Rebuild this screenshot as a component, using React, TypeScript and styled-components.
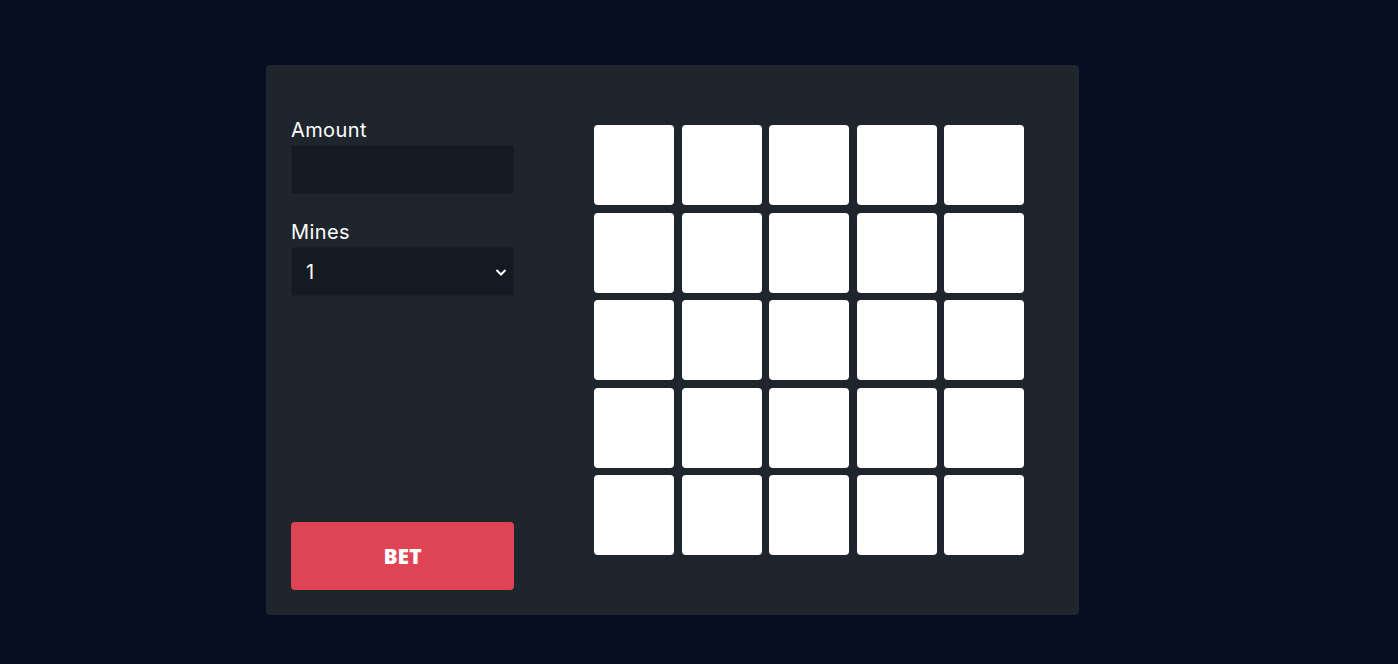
import React from "react";
import styled, { createGlobalStyle } from "styled-components";

const Global = createGlobalStyle`
  html, body { margin: 0; padding: 0; background: #050f21; }
  body { font-family: Inter, "Open Sans", "Liberation Sans", sans-serif; }
  * { box-sizing: border-box; }
`;

const Page = styled.div`
  width: 1398px;
  height: 664px;
  background: #050f21;
  display: flex;
  justify-content: flex-start;
  padding: 65px 0 0 266px;
`;

const Panel = styled.div`
  width: 813px;
  height: 550px;
  background: #1f252d;
  border-radius: 4px;
  display: flex;
  padding: 25px 55px 25px 25px;
`;

const Controls = styled.div`
  width: 223px;
  display: flex;
  flex-direction: column;
  padding-top: 27px;
`;

const Field = styled.div`
  display: flex;
  flex-direction: column;
  margin-bottom: 25px;
`;

const Label = styled.label`
  color: #ffffff;
  font-size: 20px;
  line-height: 26px;
  font-weight: 400;
  letter-spacing: 0.4px;
  margin-bottom: 2px;
`;

const Box = styled.div`
  height: 49px;
  background: #141a22;
  border: 1px solid #1a1f26;
  border-radius: 3px;
  display: flex;
  align-items: center;
  justify-content: space-between;
  padding: 0 5px 0 14px;
  color: #ffffff;
  font-size: 20px;
`;

const Spacer = styled.div`
  flex: 1;
`;

const BetButton = styled.button`
  height: 68px;
  width: 100%;
  border: none;
  border-radius: 4px;
  background: #df4454;
  color: #ffffff;
  font-family: "Open Sans", "Liberation Sans", sans-serif;
  font-weight: 800;
  font-size: 21px;
  cursor: pointer;
`;

const Board = styled.div`
  margin-left: 80px;
  margin-top: 35px;
  display: grid;
  grid-template-columns: repeat(5, 80px);
  grid-auto-rows: 80px;
  gap: 7.5px;
  align-self: flex-start;
`;

const Tile = styled.div`
  background: #ffffff;
  border-radius: 4px;
`;

const Chevron = () => (
  <svg width="14" height="10" viewBox="0 0 14 10">
    <path d="M2.5 3 L7 7.5 L11.5 3" fill="none" stroke="#ffffff" strokeWidth="2" />
  </svg>
);

export default function App() {
  return (
    <>
      <Global />
      <Page>
        <Panel>
          <Controls>
            <Field>
              <Label>Amount</Label>
              <Box />
            </Field>
            <Field>
              <Label>Mines</Label>
              <Box>
                <span>1</span>
                <Chevron />
              </Box>
            </Field>
            <Spacer />
            <BetButton>BET</BetButton>
          </Controls>
          <Board>
            {Array.from({ length: 25 }).map((_, i) => (
              <Tile key={i} />
            ))}
          </Board>
        </Panel>
      </Page>
    </>
  );
}
